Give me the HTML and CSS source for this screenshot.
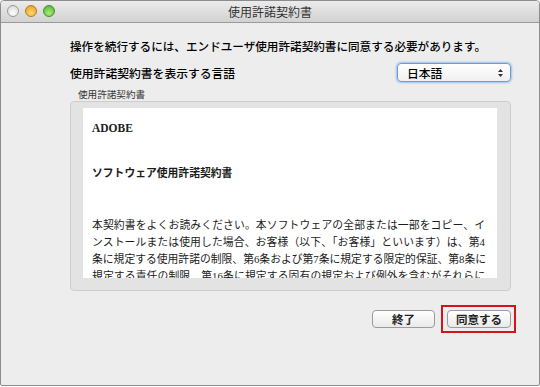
FILE: index.html
```html
<!DOCTYPE html>
<html lang="ja">

<head>
    <meta charset="UTF-8">
    <meta name="viewport" content="width=device-width, initial-scale=1.0">
    <title>使用許諾契約書</title>
    <link rel="stylesheet" href="styles.css">
</head>

<body>
    <div id="window">
        <div class="titlebar">
            <div class="lights">
                <span class="light close"></span>
                <span class="light min"></span>
                <span class="light zoom"></span>
            </div>
            <div class="title">使用許諾契約書</div>
        </div>
        <div class="content">
            <div class="intro">操作を続行するには、エンドユーザ使用許諾契約書に同意する必要があります。</div>
            <div class="lang-row">
                <span>使用許諾契約書を表示する言語</span>
                <div class="popup">
                    <span>日本語</span>
                    <svg width="7" height="10" viewBox="0 0 7 10">
                        <path d="M1 4 L3.5 1 L6 4 Z" fill="#333" />
                        <path d="M1 6 L3.5 9 L6 6 Z" fill="#333" />
                    </svg>
                </div>
            </div>
            <div class="group-label">使用許諾契約書</div>
            <div class="group">
                <div class="license">
                    <div class="lic-title">ADOBE</div>
                    <div class="lic-sub">ソフトウェア使用許諾契約書</div>
                    <div class="lic-text">
                        <div class="line">本契約書をよくお読みください。本ソフトウェアの全部または一部をコピー、イ</div>
                        <div class="line">ンストールまたは使用した場合、お客様（以下、「お客様」といいます）は、第4</div>
                        <div class="line">条に規定する使用許諾の制限、第6条および第7条に規定する限定的保証、第8条に</div>
                        <div class="line">規定する責任の制限、第16条に規定する固有の規定および例外を含むがそれらに</div>
                    </div>
                </div>
            </div>
            <div class="buttons">
                <button class="btn">終了</button>
                <button class="btn agree">同意する</button>
            </div>
        </div>
    </div>
</body>

</html>
```

FILE: styles.css
```css
body {
    margin: 0;
    background: #fff;
    font-family: "Noto Sans CJK JP", "Liberation Sans", sans-serif;
    color: #000;
}

#window {
    width: 540px;
    height: 386px;
    box-sizing: border-box;
    border: 1px solid #8c8c8c;
    border-radius: 4px 4px 2px 2px;
    background: #ededed;
    overflow: hidden;
}

.titlebar {
    height: 21px;
    position: relative;
    background: linear-gradient(#ebebeb, #d2d2d2);
    border-bottom: 1px solid #9a9a9a;
    display: flex;
    align-items: center;
    justify-content: center;
}

.lights {
    position: absolute;
    left: 6px;
    top: 4px;
    display: flex;
    gap: 6px;
}

.light {
    width: 12px;
    height: 12px;
    border-radius: 50%;
    box-sizing: border-box;
    border: 1px solid #9a9a9a;
}

.close {
    background: radial-gradient(circle at 50% 70%, #fdfdfd, #d4d4d4);
}

.min {
    background: radial-gradient(circle at 50% 70%, #ffd870, #e39a1c);
    border-color: #b37a24;
}

.zoom {
    background: radial-gradient(circle at 50% 70%, #a8ec7c, #4fae2c);
    border-color: #4c8a32;
}

.title {
    font-size: 12px;
    color: #333;
    line-height: 21px;
}

.content {
    padding: 15px 28px 0 69px;
}

.intro {
    font-size: 11.6px;
    font-weight: 500;
    line-height: 16px;
    white-space: nowrap;
}

.lang-row {
    margin-top: 9px;
    display: flex;
    justify-content: space-between;
    align-items: center;
    font-size: 11.8px;
    font-weight: 500;
}

.popup {
    width: 114px;
    height: 19px;
    box-sizing: border-box;
    border: 1px solid #6f9bd1;
    border-radius: 4px;
    box-shadow: 0 0 2px 1px #9cc1ec;
    background: linear-gradient(#ffffff, #f0f0f0);
    display: flex;
    align-items: center;
    justify-content: space-between;
    padding: 0 6px 0 9px;
    font-size: 11.8px;
}

.group-label {
    margin-top: 6px;
    margin-left: 8px;
    font-size: 9.6px;
    line-height: 12px;
    color: #333;
}

.group {
    margin-top: 1px;
    height: 190px;
    box-sizing: border-box;
    border: 1px solid #cdcdcd;
    border-radius: 4px;
    background: #e3e3e3;
    padding: 6px 13px 12px 12px;
}

.license {
    height: 170px;
    background: #fff;
    overflow: hidden;
    padding: 12px 12px 0 9px;
    box-sizing: border-box;
    font-family: "Liberation Serif", "Noto Sans CJK JP", serif;
    color: #1c1c1c;
}

.lic-title {
    font-weight: bold;
    font-size: 11.5px;
    line-height: 16px;
}

.lic-sub {
    margin-top: 29px;
    font-weight: bold;
    font-size: 10.8px;
    line-height: 16px;
}

.lic-text {
    margin-top: 36px;
    font-size: 10.8px;
    line-height: 17px;
}

.line {
    text-align: justify;
    text-align-last: justify;
    white-space: nowrap;
}

.buttons {
    margin-top: 19px;
    display: flex;
    justify-content: flex-end;
    gap: 12px;
}

.btn {
    height: 18px;
    box-sizing: border-box;
    border: 1px solid #9b9b9b;
    border-radius: 4px;
    background: linear-gradient(#ffffff, #e9e9e9);
    font-family: "Noto Sans CJK JP", sans-serif;
    font-size: 11.5px;
    font-weight: bold;
    color: #222;
    padding: 0;
    line-height: 16px;
    width: 63px;
}

.agree {
    width: 64px;
    position: relative;
}

/* red highlight frame around the agree button */
.agree::after {
    content: "";
    position: absolute;
    left: -7px;
    right: -6px;
    top: -6px;
    bottom: -6px;
    border: 2px solid #d3141c;
}
```
